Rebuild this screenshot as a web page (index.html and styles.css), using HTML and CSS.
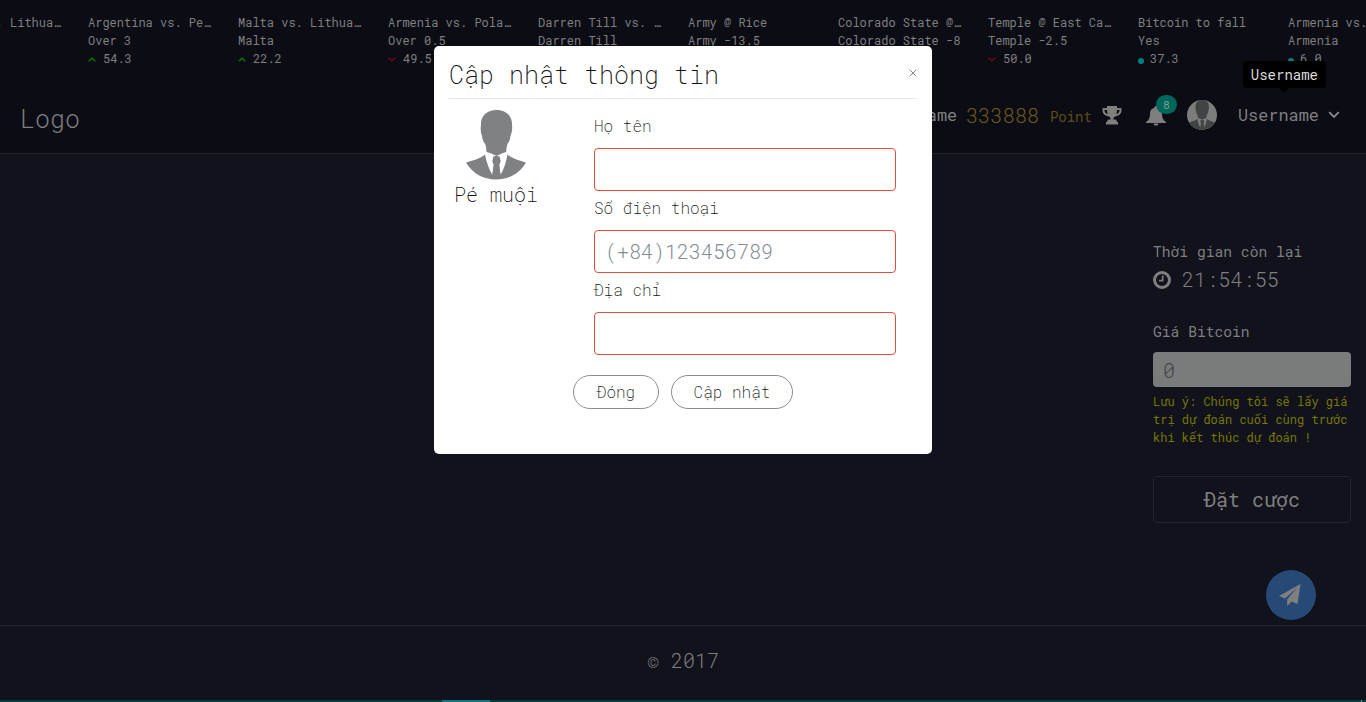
FILE: index.html
```html
<!DOCTYPE html>
<html lang="vi">
<head>
<meta charset="utf-8">
<title>Cập nhật thông tin</title>
<link rel="stylesheet" href="styles.css">
</head>
<body>
<svg class="defs" width="0" height="0">
  <symbol id="person" viewBox="0 0 60 70">
    <path d="M30.500 0C40 0 46.500 6 46 15C46.500 18 46 22 44.500 26C44 30 43 32 41.500 34C40.500 37 40.500 39 40.200 42C37 43 33 44.500 30.500 46C28 44.500 24 43 20.500 42C20.200 39 20.200 37 19.200 34C17.500 32 16.500 30 16 26C14.500 22 14.500 18 15 15C14.500 6 21 0 30.500 0Z"/>
    <path d="M19 44.500C20 51 23 59 26.300 65L27.600 55L26.300 51L27.500 46.500L30.500 46L33.500 46.500L34.700 51L33.400 55L34.500 65C38 59 40.500 51 41.500 44.500C47 49 53 50 60 52.500C54 63 43 69.500 30 69.500S6 63 0 52.500C7 50 13 49.500 19 44.500Z"/>
    <path d="M28 46.500H33L34 51L32.800 54L34.500 65L30.500 69L26.300 65L28.200 54L27 51Z"/>
  </symbol>
</svg>
<div class="page">
  <header class="header">
    <div class="ticker">
      <div class="tick"><p>Italy vs. Lithua…</p><p>&nbsp;</p></div>
      <div class="tick"><p>Argentina vs. Pe…</p><p>Over 3</p><p><svg class="arrow up" viewBox="0 0 8 5"><path d="M.7 4.300L4 1.200L7.300 4.300"/></svg>54.3</p></div>
      <div class="tick"><p>Malta vs. Lithua…</p><p>Malta</p><p><svg class="arrow up" viewBox="0 0 8 5"><path d="M.7 4.300L4 1.200L7.300 4.300"/></svg>22.2</p></div>
      <div class="tick"><p>Armenia vs. Pola…</p><p>Over 0.5</p><p><svg class="arrow down" viewBox="0 0 8 5"><path d="M.7 .7L4 3.800L7.300 .7"/></svg>49.5</p></div>
      <div class="tick"><p>Darren Till vs. …</p><p>Darren Till</p></div>
      <div class="tick"><p>Army @ Rice</p><p>Army -13.5</p></div>
      <div class="tick"><p>Colorado State @…</p><p>Colorado State -8</p></div>
      <div class="tick"><p>Temple @ East Ca…</p><p>Temple -2.5</p><p><svg class="arrow down" viewBox="0 0 8 5"><path d="M.7 .7L4 3.800L7.300 .7"/></svg>50.0</p></div>
      <div class="tick"><p>Bitcoin to fall</p><p>Yes</p><p><i class="dot"></i>37.3</p></div>
      <div class="tick"><p>Armenia vs. Pola…</p><p>Armenia</p><p><i class="dot"></i>6.0</p></div>
    </div>
    <nav class="nav">
      <span class="logo">Logo</span>
      <div class="tools">
        <span class="user">Username</span>
        <span class="score">333888</span>
        <span class="point">Point</span>
        <svg class="trophy" viewBox="0 0 20 19"><path d="M5 0H15V2H19.500V4.500C19.500 8 16.500 10 13 10.500C12 11.300 11.300 12 11.300 13.500H13.500Q15 14 15 16H16V18.500H4V16H5Q5 14 6.500 13.500H8.700C8.700 12 8 11.300 7 10.500C3.500 10 .5 8 .5 4.500V2H5ZM5 4H2.500C2.500 6 3.500 7.500 5.700 8Q5 6 5 4ZM15 4Q15 6 14.300 8C16.500 7.500 17.500 6 17.500 4Z"/></svg>
        <span class="bell"><svg viewBox="0 0 20 20"><path d="M10 0C11 0 11.500 .7 11.500 1.700C15 2.500 16 5 16 8C16 12 17.500 14.500 20 16V17H0V16C2.500 14.500 4 12 4 8C4 5 5 2.500 8.500 1.700C8.500 .7 9 0 10 0ZM7.500 17.500H12.500C12.500 20.500 7.500 20.500 7.500 17.500Z"/></svg><b class="badge">8</b></span>
        <span class="avatar"><svg viewBox="0 0 60 70"><use href="#person"/></svg></span>
        <span class="user account">Username<span class="tooltip">Username</span></span>
        <svg class="chevron" viewBox="0 0 12 8"><path d="M1.200 1.200L6 6L10.800 1.200"/></svg>
      </div>
    </nav>
  </header>
  <main class="main">
    <aside class="side">
      <div class="label">Thời gian còn lại</div>
      <div class="clock"><svg viewBox="0 0 18 18"><circle cx="9" cy="9" r="7.500"/><path d="M9.700 4.500V9.700H6"/></svg><span>21:54:55</span></div>
      <div class="label">Giá Bitcoin</div>
      <div class="price">0</div>
      <p class="warn">Lưu ý: Chúng tôi sẽ lấy giá trị dự đoán cuối cùng trước khi kết thúc dự đoán !</p>
      <div class="bet">Đặt cược</div>
    </aside>
  </main>
  <footer class="footer"><span>© 2017</span></footer>
  <div class="strip"><i class="seg"></i><i class="mark"></i></div>
</div>
<div class="fab"><svg viewBox="0 0 22 22"><path d="M21.500 0L18.500 20L12.500 17.500L8.200 22V15.500L18 4L6 14.500L0 12Z"/></svg></div>
<section class="modal">
  <div class="modal-head"><h1>Cập nhật thông tin</h1><svg class="close" viewBox="0 0 8 8"><path d="M.7 .7L7.300 7.300M7.300 .7L.7 7.300"/></svg></div>
  <div class="modal-body">
    <div class="profile"><svg viewBox="0 0 60 70"><use href="#person"/></svg><span>Pé muội</span></div>
    <div class="form">
      <label>Họ tên</label><div class="field"></div>
      <label>Số điện thoại</label><div class="field">(+84)123456789</div>
      <label>Địa chỉ</label><div class="field"></div>
    </div>
  </div>
  <div class="actions"><span class="pill">Đóng</span><span class="pill">Cập nhật</span></div>
</section>
</body>
</html>
```
FILE: styles.css
```css
* { box-sizing: border-box; }
body { margin: 0; font-family: "Roboto Mono", "Liberation Mono", monospace; color: #7f7f80; background: #11121b; overflow: hidden; }
p, h1 { margin: 0; }
.defs { position: absolute; }
.page { width: 1366px; height: 702px; display: flex; flex-direction: column; }
.header { height: 154px; background: #0b0c14; border-bottom: 1px solid #222329; }
.ticker { display: flex; padding-top: 13px; height: 77px; margin-left: -62px; width: 1428px; overflow: hidden; font-size: 12px; line-height: 18px; font-weight: 430; }
.tick { flex: 0 0 150px; white-space: nowrap; }
.tick p { height: 18px; }
.arrow { width: 8px; height: 5px; margin-right: 7px; vertical-align: 1px; fill: none; stroke-width: 1.3; }
.up { stroke: #008000; }
.down { stroke: #720b10; }
.dot { display: inline-block; width: 6px; height: 6px; margin-right: 6px; border-radius: 50%; background: #008080; vertical-align: -1px; }
.nav { display: flex; justify-content: space-between; height: 76px; padding: 0 26px 0 20px; }
.logo { font-size: 25px; line-height: 84px; font-weight: 340; }
.tools { display: flex; align-items: center; height: 76px; white-space: nowrap; }
.user { font-size: 16.900px; line-height: 24px; }
.score { margin: -1px 0 0 9px; font-size: 20.200px; font-weight: 340; color: #6f5b1b; }
.point { margin: 3px 10px 0 11px; font-size: 14px; color: #5e4d19; }
.trophy { width: 20px; height: 19px; fill: #7f7f80; }
.bell { position: relative; margin: 2px 21px 0 24px; width: 20px; height: 20px; }
.bell svg { display: block; width: 20px; height: 20px; fill: #7f7f80; }
.badge { position: absolute; left: 10px; top: -11px; width: 21px; height: 19px; border-radius: 10px; background: #00675d; font-size: 11px; line-height: 20px; text-align: center; font-weight: 400; color: #829d9b; }
.avatar { width: 30px; height: 30px; margin-right: 21px; border-radius: 50%; background: #7c7c7c; overflow: hidden; }
.avatar svg { display: block; width: 30px; height: 30px; fill: #414444; }
.account { position: relative; }
.tooltip { position: absolute; left: 5px; top: -42px; width: 83px; height: 27px; border-radius: 4px; background: #000; color: #dcdcdc; font-size: 14px; line-height: 28px; font-weight: 430; text-align: center; }
.tooltip::after { content: ""; position: absolute; left: 36px; top: 27px; border: 5px solid transparent; border-top-color: #000; border-bottom: 0; }
.chevron { width: 12px; height: 8px; margin-left: 9px; fill: none; stroke: #8a8a8a; stroke-width: 1.800; }
.main { flex: 1; display: flex; justify-content: flex-end; padding: 88px 15px 0 0; }
.side { width: 198px; }
.label { font-size: 14.650px; line-height: 20px; white-space: nowrap; }
.clock { display: flex; align-items: center; gap: 11px; margin: 4px 0 28px; height: 28px; font-size: 20.200px; font-weight: 350; }
.clock span { margin-top: -2px; }
.clock svg { width: 18px; height: 18px; fill: none; stroke: #7f7f80; stroke-width: 3; }
.clock path { stroke-width: 1.700; }
.price { height: 35px; margin-top: 10px; padding-left: 10px; border-radius: 4px; background: #7a7b7b; color: #40434a; font-size: 20px; line-height: 37px; font-weight: 300; }
.warn { margin: 5px -3px 0 0; font-size: 12px; line-height: 18px; font-weight: 430; color: #777800; }
.bet { height: 47px; margin-top: 30px; border: 1px solid #22232b; border-radius: 4px; font-size: 20px; line-height: 44px; text-align: center; }
.footer { height: 75px; border-top: 1px solid #23242c; display: flex; justify-content: center; font-size: 20px; line-height: 68px; font-weight: 340; }
.strip { height: 2px; background: #003f41; display: flex; }
.seg { width: 48px; margin-left: 442px; background: #137180; }
.mark { width: 1px; margin-left: 871px; background: #7f8f90; }
.fab { position: absolute; left: 1266px; top: 570px; width: 50px; height: 50px; padding-right: 2px; border-radius: 50%; background: #264a75; display: flex; align-items: center; justify-content: center; }
.fab svg { width: 22px; height: 22px; fill: #7f7f80; }
.modal { position: absolute; left: 434px; top: 46px; width: 498px; height: 408px; padding: 0 15px; border-radius: 5px; background: #fff; color: #111; font-weight: 220; }
.modal-head { display: flex; justify-content: space-between; height: 53px; border-bottom: 1px solid #e7e7e7; }
h1 { font-size: 25px; line-height: 57px; font-weight: 220; }
.close { width: 8px; height: 8px; margin-top: 23px; fill: none; stroke: #888; stroke-width: 1; }
.modal-body { display: flex; height: 276px; padding-top: 11px; }
.profile { width: 94px; display: flex; flex-direction: column; align-items: center; font-size: 20px; line-height: 29px; }
.profile svg { width: 60px; height: 70px; margin-right: 1px; fill: #808183; }
.form { width: 302px; margin-left: 51px; }
.form label { display: block; height: 38px; padding-top: 2px; font-size: 16px; line-height: 28px; }
.field { height: 43px; margin-bottom: 1px; border: 1px solid #e74c3c; border-radius: 4px; padding-left: 10px; font-size: 20px; line-height: 41px; font-weight: 330; color: #858d94; }
.actions { display: flex; gap: 12px; margin-left: 124px; }
.pill { width: 86px; height: 34px; border: 1px solid #8d8d8d; border-radius: 17px; font-size: 16px; line-height: 32px; text-align: center; }
.pill + .pill { width: 122px; }
```
